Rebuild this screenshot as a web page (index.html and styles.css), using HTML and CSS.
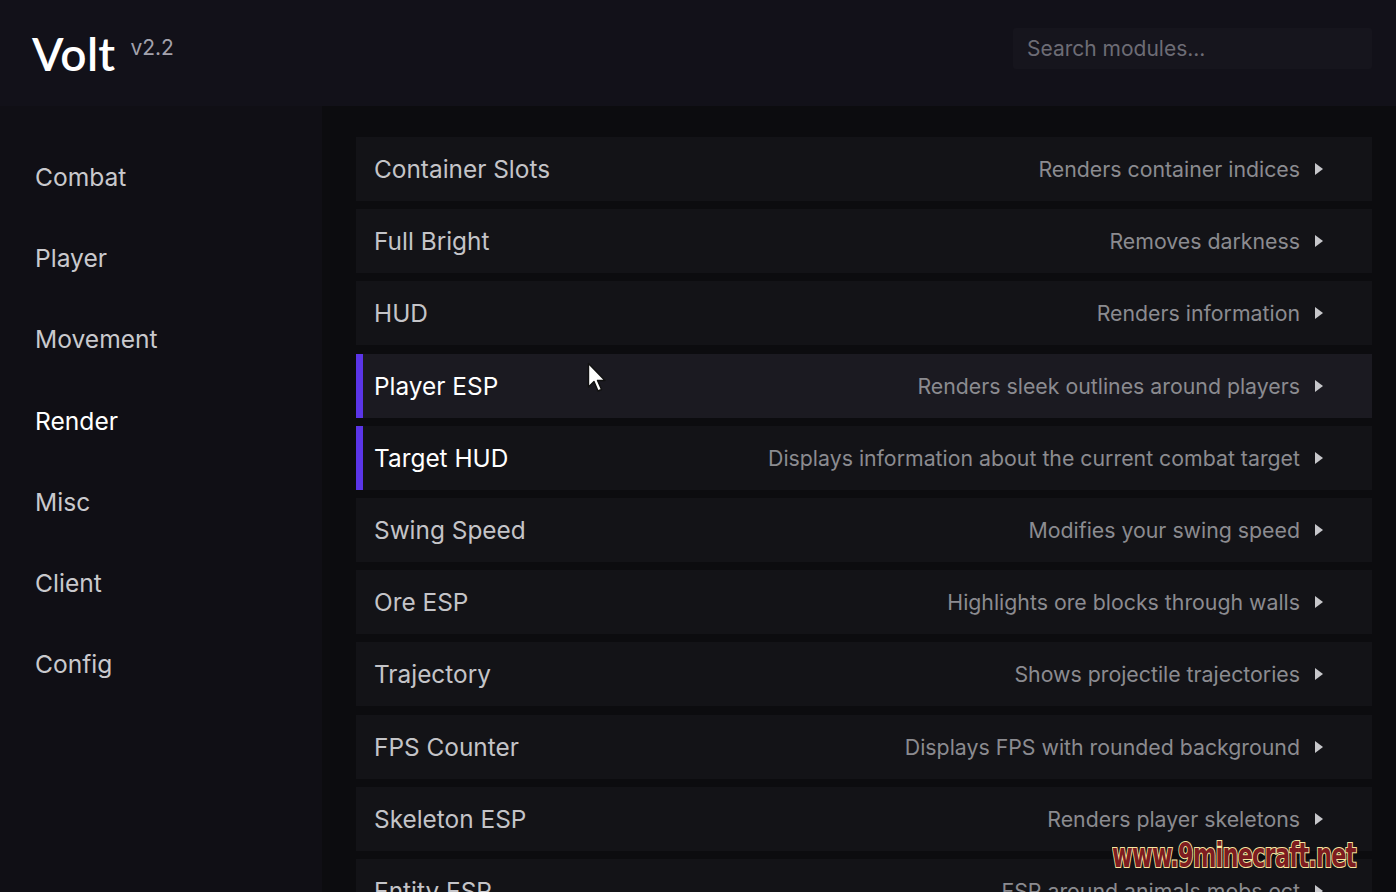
FILE: index.html
```html
<!DOCTYPE html>
<html>
<head>
<meta charset="utf-8">
<link rel="stylesheet" href="styles.css">
</head>
<body>
<div class="app">
  <header class="topbar">
    <div class="brand"><span class="logo">Volt</span><span class="ver">v2.2</span></div>
    <div class="search">Search modules...</div>
  </header>
  <div class="body">
    <nav class="sidebar">
      <div class="cat">Combat</div>
      <div class="cat">Player</div>
      <div class="cat">Movement</div>
      <div class="cat active">Render</div>
      <div class="cat">Misc</div>
      <div class="cat">Client</div>
      <div class="cat">Config</div>
    </nav>
    <main class="modules">
      <div class="row"><span class="name">Container Slots</span><span class="desc">Renders container indices</span><span class="arrow"></span></div>
      <div class="row"><span class="name">Full Bright</span><span class="desc">Removes darkness</span><span class="arrow"></span></div>
      <div class="row"><span class="name">HUD</span><span class="desc">Renders information</span><span class="arrow"></span></div>
      <div class="row on hover"><span class="name">Player ESP</span><span class="desc">Renders sleek outlines around players</span><span class="arrow"></span></div>
      <div class="row on"><span class="name">Target HUD</span><span class="desc">Displays information about the current combat target</span><span class="arrow"></span></div>
      <div class="row"><span class="name">Swing Speed</span><span class="desc">Modifies your swing speed</span><span class="arrow"></span></div>
      <div class="row"><span class="name">Ore ESP</span><span class="desc">Highlights ore blocks through walls</span><span class="arrow"></span></div>
      <div class="row"><span class="name">Trajectory</span><span class="desc">Shows projectile trajectories</span><span class="arrow"></span></div>
      <div class="row"><span class="name">FPS Counter</span><span class="desc">Displays FPS with rounded background</span><span class="arrow"></span></div>
      <div class="row"><span class="name">Skeleton ESP</span><span class="desc">Renders player skeletons</span><span class="arrow"></span></div>
      <div class="row"><span class="name">Entity ESP</span><span class="desc">ESP around animals mobs ect</span><span class="arrow"></span></div>
    </main>
  </div>
  <svg class="cursor" width="22" height="34" viewBox="0 0 22 34"><path d="M1.5 1.5 L1.5 25 L7 19.5 L11 29 L14.5 27.5 L10.5 18.5 L18 18.5 Z" fill="#fff" stroke="#111" stroke-width="1.4" stroke-linejoin="round"/></svg>
  <div class="watermark">www.9minecraft.net</div>
</div>
</body>
</html>
```
FILE: styles.css
```css
* { box-sizing: border-box; }
html, body { margin: 0; padding: 0; }
body {
  width: 1396px;
  height: 892px;
  overflow: hidden;
  background: #0c0c0f;
  font-family: Inter, "Noto Sans", sans-serif;
}
.app {
  position: relative;
  width: 1396px;
  height: 892px;
  display: flex;
  flex-direction: column;
}
.topbar {
  height: 106px;
  flex: none;
  background: #121119;
  display: flex;
  align-items: flex-start;
  justify-content: space-between;
  padding: 0 24px 0 32px;
}
.brand {
  display: flex;
  align-items: flex-start;
  padding-top: 27px;
}
.logo {
  font-family: Lato, Inter, sans-serif;
  font-size: 46px;
  font-weight: 600;
  color: #ffffff;
  line-height: 54px;
  letter-spacing: 0.3px;
}
.ver {
  font-size: 21px;
  color: #a3a2ad;
  margin-left: 15px;
  margin-top: 9px;
  line-height: 24px;
}
.search {
  margin-top: 28px;
  width: 359px;
  height: 41px;
  background: #16151d;
  border-radius: 3px;
  color: #6d6c75;
  font-size: 21px;
  line-height: 42px;
  padding-left: 14px;
}
.body {
  flex: 1;
  display: grid;
  grid-template-columns: 322px 1fr;
  min-height: 0;
}
.sidebar {
  background: #100f15;
  padding: 31px 0 0 35px;
  display: flex;
  flex-direction: column;
}
.cat {
  height: 81.2px;
  line-height: 81px;
  font-size: 24.6px;
  color: #c9c9cd;
}
.cat.active { color: #ffffff; }
.modules {
  padding: 31px 24px 0 34px;
  display: flex;
  flex-direction: column;
  gap: 8.2px;
  overflow: hidden;
}
.row {
  flex: none;
  height: 64px;
  background: #131317;
  display: flex;
  align-items: center;
  padding: 0 49px 0 18px;
  border-left: 0 solid #5b35e8;
}
.row.on {
  border-left-width: 7px;
  padding-left: 11px;
}
.row.hover { background: #1b1a21; }
.name {
  font-size: 24.4px;
  color: #c4c4c8;
  flex: 1;
}
.row.on .name { color: #ffffff; }
.desc {
  font-size: 21.3px;
  color: #8b8b90;
}
.arrow {
  width: 0;
  height: 0;
  margin-left: 15px;
  border-left: 8px solid #c7c7cb;
  border-top: 6px solid transparent;
  border-bottom: 6px solid transparent;
}
.cursor {
  position: absolute;
  left: 587px;
  top: 362px;
}
.watermark {
  position: absolute;
  left: 1112px;
  top: 836px;
  font-family: "DejaVu Sans Condensed", "Liberation Sans", sans-serif;
  font-weight: 700;
  font-size: 32px;
  line-height: 36px;
  color: #7d1c20;
  letter-spacing: -1px;
  -webkit-text-stroke: 2px #f6e7a0;
  paint-order: stroke fill;
  white-space: nowrap;
  transform-origin: left top;
  transform: scale(0.78, 1.08);
}
```
